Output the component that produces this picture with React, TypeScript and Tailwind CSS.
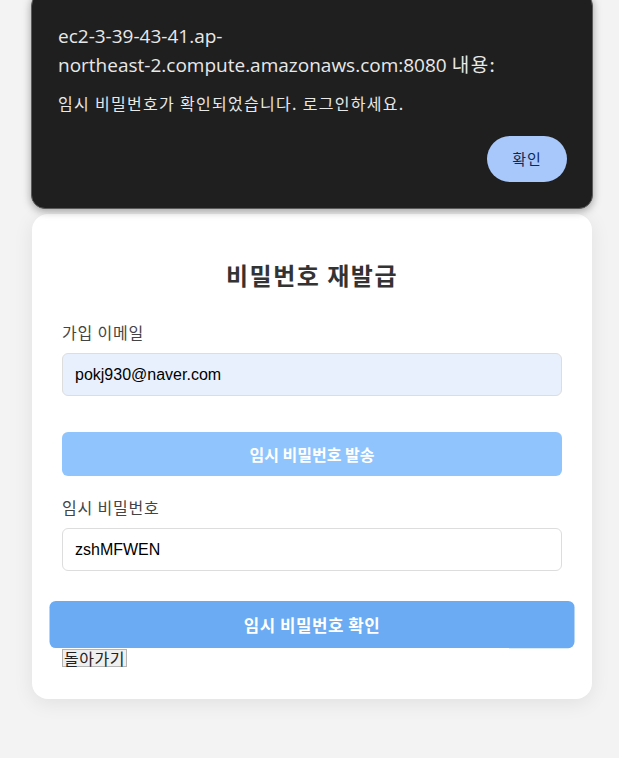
const kr = "font-['Noto_Sans_CJK_KR',sans-serif]";

const AlertDialog = () => (
  <div className="absolute left-[31px] top-[-8px] w-[562px] h-[217px] rounded-[14px] border border-[#5a5a5a] bg-[#1f1f1f] shadow-[0_2px_8px_rgba(0,0,0,0.35)] pt-[30px] pl-[26px] pr-[25px]">
    <p className="font-['Open_Sans','Noto_Sans_CJK_KR',sans-serif] text-[19px] leading-[27px] text-[#e8e8e8]">
      ec2-3-39-43-41.ap-
      <br />
      northeast-2.compute.amazonaws.com:8080 <span className={`${kr} tracking-[1.5px]`}>내용:</span>
    </p>
    <p className={`${kr} mt-[13px] text-[16px] leading-[22px] tracking-[1.3px] text-[#e8e8e8]`}>
      임시 비밀번호가 확인되었습니다. 로그인하세요.
    </p>
    <div className="flex justify-end mt-[22px]">
      <button className={`${kr} w-[80px] h-[46px] rounded-full bg-[#a8c7fa] text-[15px] tracking-[1px] text-[#0b2a5c]`}>
        확인
      </button>
    </div>
  </div>
);

export default function App() {
  return (
    <div className="relative min-h-[758px] w-full bg-[#f3f3f3] overflow-hidden">
      <div className="pt-[214px] px-[32px]">
        <div className="w-[560px] rounded-[16px] bg-white shadow-[0_4px_20px_rgba(0,0,0,0.08)] px-[30px] pt-[46px] pb-[32px]">
          <h2 className={`${kr} text-center text-[24px] leading-[30px] tracking-[1.5px] font-bold text-[#333]`}>
            비밀번호 재발급
          </h2>

          <label className={`${kr} block mt-[31px] text-[16px] leading-[22px] tracking-[0.8px] text-[#444]`}>가입 이메일</label>
          <div className="mt-[10px] h-[43px] rounded-[6px] border border-[#ddd] bg-[#e8f0fe] px-[12px] flex items-center font-['Liberation_Sans',sans-serif] text-[16px] text-black">
            pokj930@naver.com
          </div>

          <button className={`${kr} mt-[36px] w-full h-[44px] rounded-[6px] bg-[#90c4fd] text-white text-[16px] font-bold`}>
            임시 비밀번호 발송
          </button>

          <label className={`${kr} block mt-[20px] text-[16px] leading-[22px] tracking-[0.8px] text-[#444]`}>임시 비밀번호</label>
          <div className="mt-[10px] h-[43px] rounded-[6px] border border-[#ddd] bg-white px-[12px] flex items-center font-['Liberation_Sans',sans-serif] text-[16px] text-black">
            zshMFWEN
          </div>

          <button className={`${kr} mt-[31px] w-full h-[45px] rounded-[6px] bg-[#6aabf3] text-white text-[16px] tracking-[0.5px] font-bold scale-[1.05]`}>
            임시 비밀번호 확인
          </button>

          <div className="flex mt-[2px]">
            <button className={`${kr} border border-[#b5b5b5] bg-[#efefef] px-[1px] text-[16px] leading-[16px] tracking-[0.5px] text-[#222]`}>
              돌아가기
            </button>
          </div>
        </div>
      </div>
      <AlertDialog />
    </div>
  );
}
